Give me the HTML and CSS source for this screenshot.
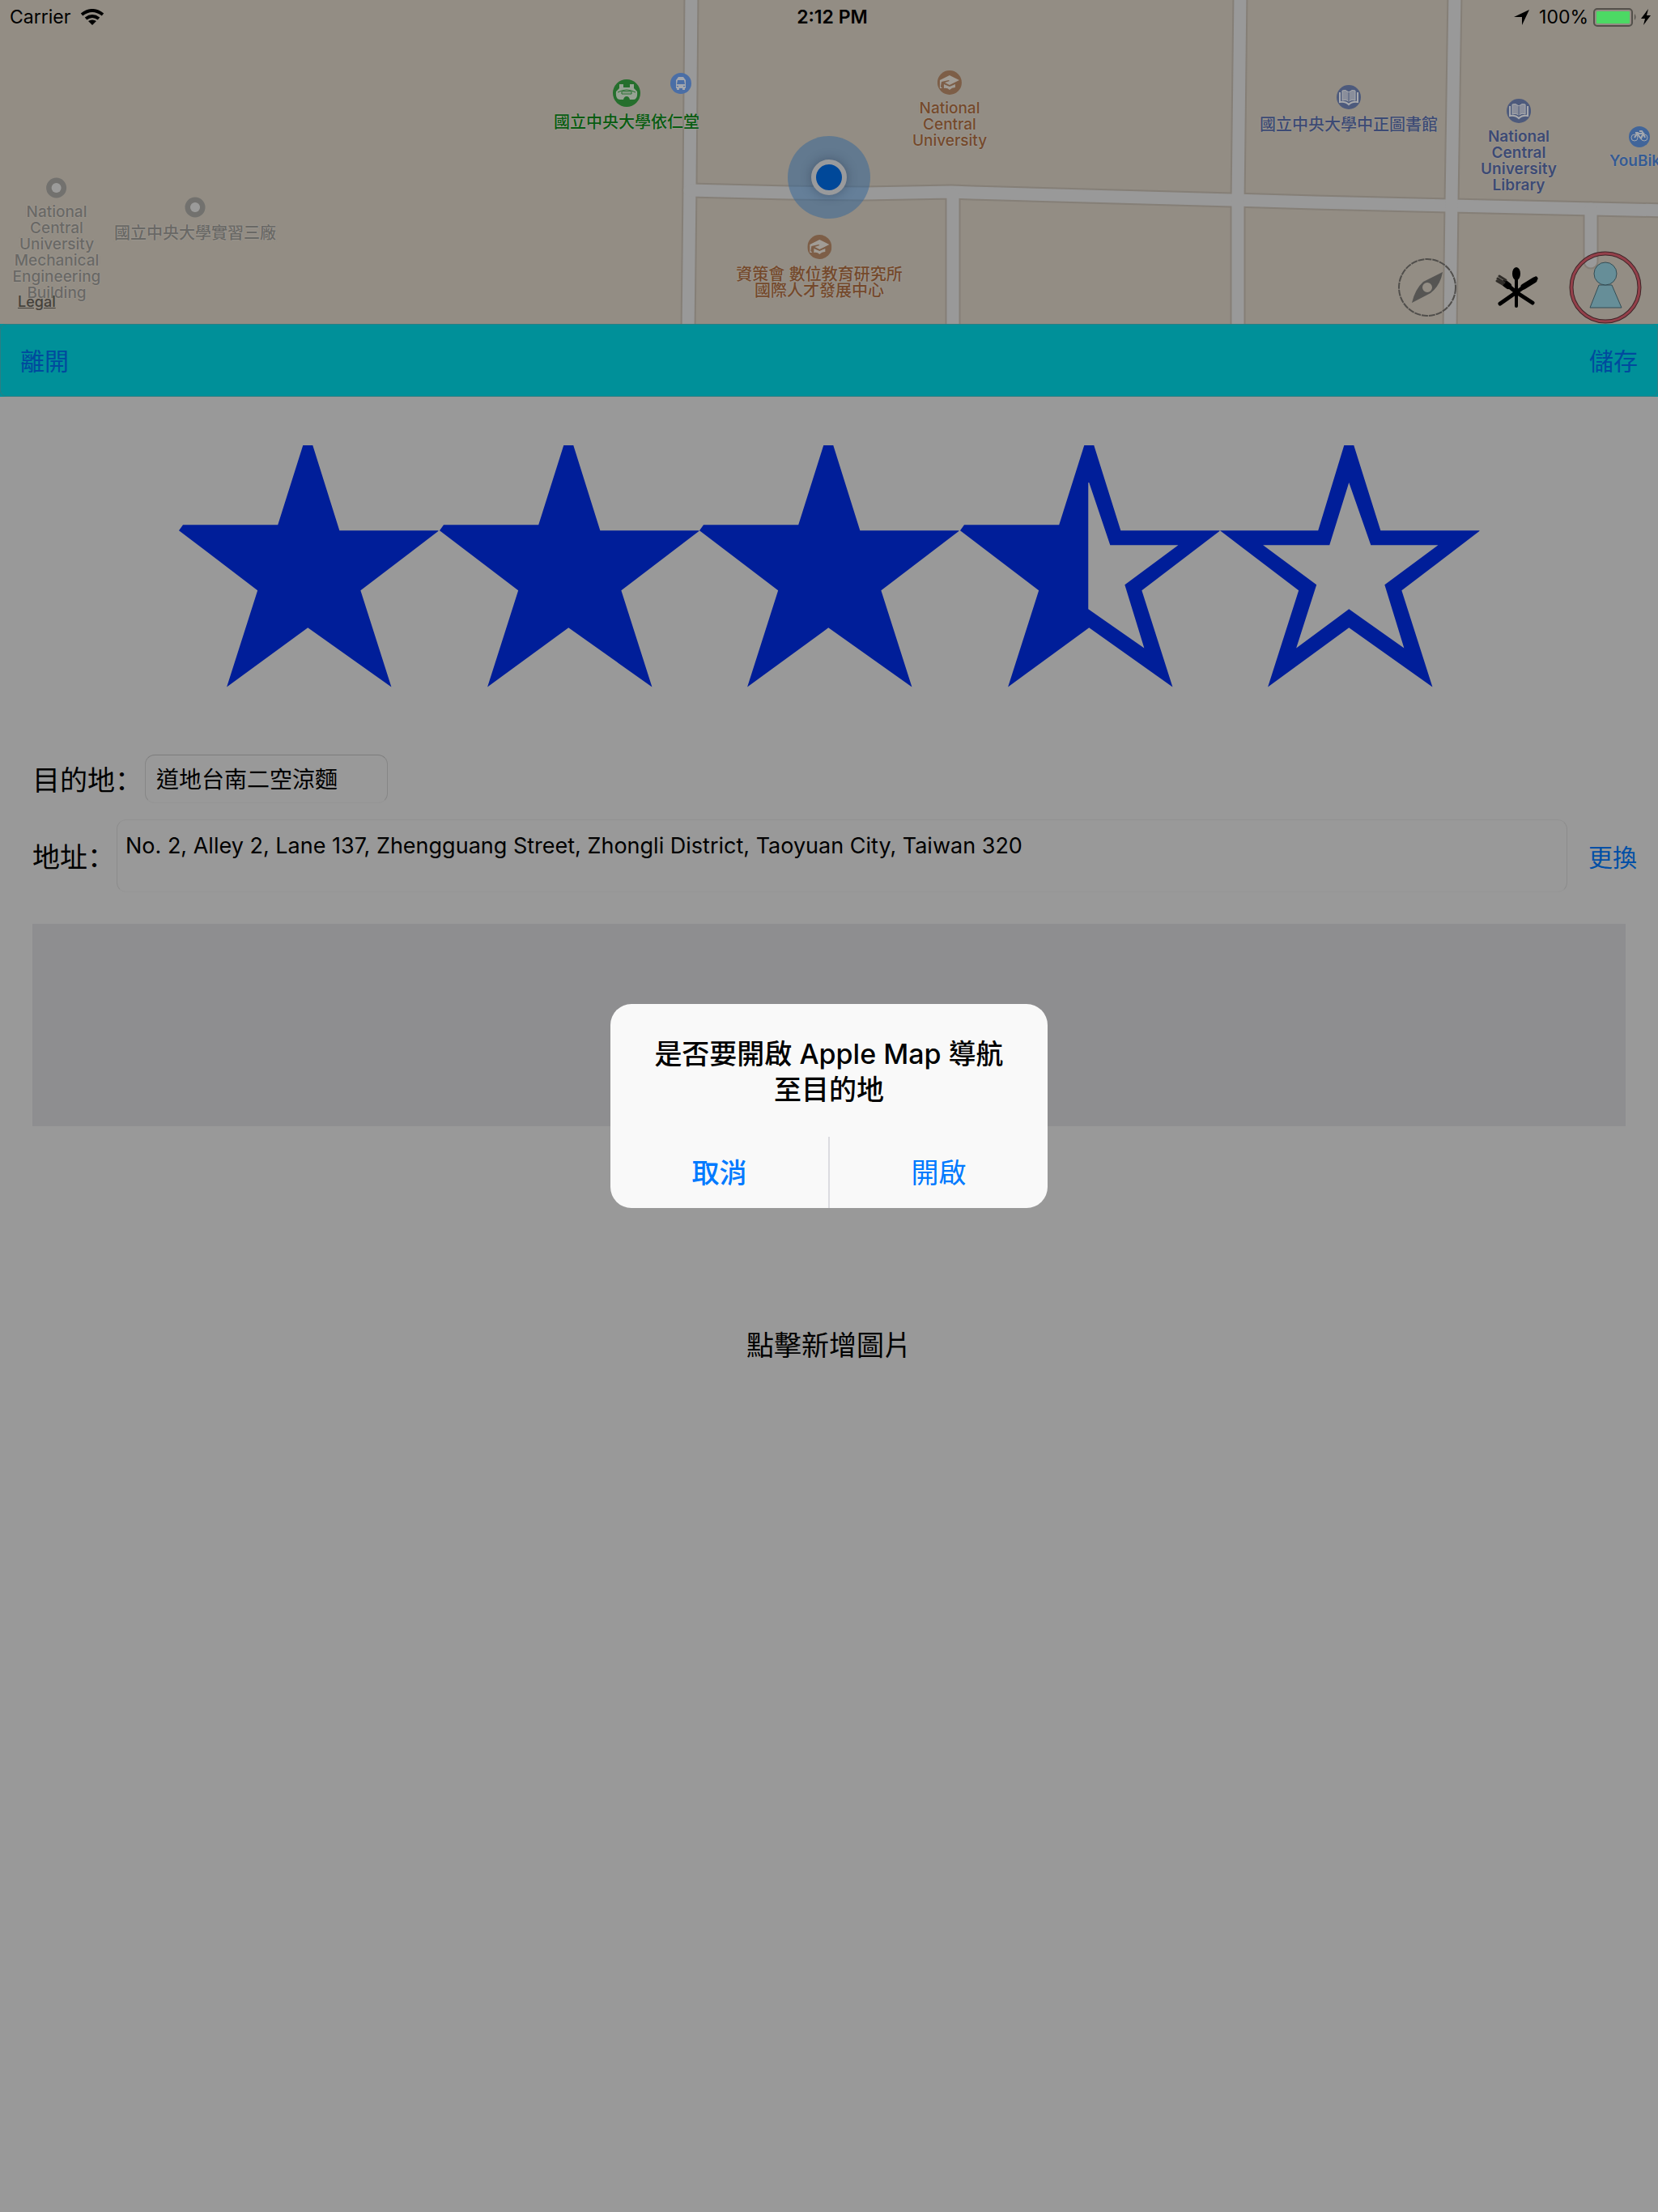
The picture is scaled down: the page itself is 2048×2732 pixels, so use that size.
FILE: index.html
```html
<!DOCTYPE html>
<html lang="zh-Hant">
<head>
<meta charset="utf-8">
<meta name="viewport" content="width=device-width, initial-scale=1">
<title>目的地</title>
<link rel="stylesheet" href="styles.css">
</head>
<body>
<!-- shared symbols -->
<svg class="symbols" aria-hidden="true">
  <symbol id="cap" viewBox="0 0 30 30">
    <circle cx="15" cy="15" r="15" fill="#7d5e47"/>
    <path d="M15 6 L27 12 L15 18 L9 15 L15 13 L14 12 L5 14 L4 20 L6 22 L3 22 L3 12 Z M8 17 L15 20 L22 17 V21 Q18 21 15 24 Q12 21 8 22 Z" fill="#a19c95"/>
  </symbol>
  <symbol id="book" viewBox="0 0 30 30">
    <circle cx="15" cy="15" r="15" fill="#4d5a7c"/>
    <path d="M15 9 Q11 5 7 7 V19 Q11 17 15 20 Q19 17 23 19 V7 Q19 5 15 9 Z" fill="#8a8e9b" stroke="#a9aaad" stroke-width="1"/>
    <path d="M15 9 V20" stroke="#4d5a7c" stroke-width="1"/>
    <path d="M4 9 V21 Q11 20 15 24 Q19 20 26 21 V9" fill="none" stroke="#a9aaad" stroke-width="2"/>
  </symbol>
  <symbol id="dot" viewBox="0 0 26 26">
    <circle cx="13" cy="13" r="9" fill="none" stroke="#72716e" stroke-width="7"/>
    <circle cx="13" cy="13" r="6" fill="#9b9b9a"/>
  </symbol>
  <symbol id="star-full" viewBox="0 0 321 299">
    <path d="M154 0 H166 L199 105 H322 L225 179 L263 298 L160 225 L60 298 L98 179 L1 105 L6 98 H123 Z"/>
  </symbol>
  <symbol id="star-empty" viewBox="0 0 321 299">
    <path fill-rule="evenodd" d="M154 0 H166 L199 105 H322 L225 179 L263 298 L160 225 L60 298 L98 179 L1 105 H122 Z M160 46 L136 123 H54 L120 172 L95 250 L160 202 L228 250 L204 172 L270 123 H187 Z"/>
  </symbol>
  <symbol id="star-half" viewBox="0 0 321 299">
    <path fill-rule="evenodd" d="M154 0 H166 L199 105 H322 L225 179 L263 298 L160 225 L60 298 L98 179 L1 105 L6 98 H123 Z M159 46 V202 L228 250 L204 172 L270 123 H186 L160 46 Z"/>
  </symbol>
</svg>

<section class="map" aria-label="地圖">
  <svg class="roads" viewBox="0 0 2048 400" preserveAspectRatio="xMidYMid slice" aria-hidden="true">
    <defs>
      <g id="road-lines">
        <path d="M854 -10 L852 230 L850 410"/>
        <path d="M852 235 L973 238 L1069 239 L1175 237 L1200 238 L1521 247 L1624 250 L1793 254 L2060 260"/>
        <path d="M1177 240 V410"/>
        <path d="M1532 -10 L1529 250 L1529 410"/>
        <path d="M1797 -10 L1793 250 L1791 410"/>
        <path d="M1965 258 V323"/>
      </g>
    </defs>
    <use href="#road-lines" class="road-edge"/>
    <use href="#road-lines" class="road-fill"/>
  </svg>

  <div class="pin pin-mech"><svg class="s26"><use href="#dot"/></svg><span>National<br>Central<br>University<br>Mechanical<br>Engineering<br>Building</span></div>
  <div class="pin pin-cjk pin-factory"><svg class="s26"><use href="#dot"/></svg><span>國立中央大學實習三廠</span></div>
  <div class="pin pin-cjk pin-hall"><svg class="s34" viewBox="0 0 34 34"><circle cx="17" cy="17" r="17" fill="#256f2d"/><path d="M8 6 H13 V10 H21 V6 H26 V11 L30 15 Q31 25 25 25 H21 Q20 21 17 21 Q14 21 13 25 H9 Q3 25 4 15 L8 11 Z" fill="#97a294"/><path d="M6 16 Q17 10 28 16 M11 15 H23 V18 H11 Z" fill="none" stroke="#256f2d" stroke-width="1"/></svg><span>國立中央大學依仁堂</span></div>
  <div class="pin pin-bus"><svg class="s26" viewBox="0 0 26 26"><circle cx="13" cy="13" r="13" fill="#4a6ea6"/><path d="M10 5 H16 L19 9 V19 H7 V9 Z M8 19 H11 V21 H8 Z M15 19 H18 V21 H15 Z" fill="#a3a7ae"/><path d="M9 9 H17 L18 14 H8 Z M8 16 H10 V17 H8 Z M16 16 H18 V17 H16 Z" fill="#4a6ea6"/></svg></div>
  <div class="pin pin-ncu"><svg class="s30"><use href="#cap"/></svg><span>National<br>Central<br>University</span></div>
  <div class="pin pin-cjk pin-iii"><svg class="s30"><use href="#cap"/></svg><span>資策會 數位教育研究所<br>國際人才發展中心</span></div>
  <div class="pin pin-cjk pin-zhongzheng"><svg class="s30"><use href="#book"/></svg><span>國立中央大學中正圖書館</span></div>
  <div class="pin pin-library"><svg class="s30"><use href="#book"/></svg><span>National<br>Central<br>University<br>Library</span></div>
  <div class="pin pin-youbike"><svg class="s26" viewBox="0 0 26 26"><circle cx="13" cy="13" r="13" fill="#41659a"/><g fill="none" stroke="#a3a7ae" stroke-width="1"><circle cx="7" cy="14" r="4"/><circle cx="19" cy="14" r="4"/><path d="M7 14 L10 9 L15 15 L18 9 H10 M18 9 L16 6 H13 M18 9 L20 14 M8 8 H12" stroke-width="2"/></g></svg><span>YouBike</span></div>
  <div class="here"></div>
  <a class="legal" href="#legal">Legal</a>

  <header class="status">
    <div class="status-left">Carrier
      <svg width="30" height="20" viewBox="0 0 30 20" fill="none" stroke="#000" stroke-width="4"><path d="M2 7 Q15 -3 28 7"/><path d="M7 12 Q15 6 23 12"/><path d="M15 20 L10 15 Q15 12 20 15 Z" fill="#000" stroke="none"/></svg>
    </div>
    <div class="status-time">2:12 PM</div>
    <div class="status-right">
      <svg width="19" height="19" viewBox="0 0 19 19"><path d="M19 0 L10 19 V9 H0 Z"/></svg>
      <span class="percent">100%</span>
      <svg width="72" height="24" viewBox="0 0 72 24"><rect x="1" y="2" width="47" height="21" rx="4" fill="none" stroke="#534f4a" stroke-width="2"/><rect x="4" y="5" width="41" height="15" rx="1" fill="#4cd964"/><path d="M51 8 Q54 12 51 16 Z" fill="#534f4a"/><path d="M68 2 L59 14 H64 L62 22 L71 10 H66 Z"/></svg>
    </div>
  </header>

  <div class="map-tools">
    <button type="button" aria-label="指南針"><svg viewBox="0 0 90 90"><circle cx="45" cy="45" r="35" fill="none" stroke="#504e4b" stroke-width="2" stroke-dasharray="8 1"/><path fill-rule="evenodd" d="M64 26 Q61 43 49 52 L26 64 Q30 47 40 38 Z M45 39 A6 6 0 1 0 45 51 A6 6 0 1 0 45 39 Z" fill="#565553"/></svg></button>
    <button type="button" aria-label="餐廳"><svg viewBox="0 0 90 90" stroke="#000" stroke-linecap="round" fill="none"><path d="M45 24 V68" stroke-width="4"/><ellipse cx="45" cy="28" rx="4" ry="7" fill="#000" stroke-width="2"/><path d="M45 51 L69 34 M45 51 L25 65 M45 51 L65 64" stroke-width="5"/><path d="M54 44 L67 36" stroke-width="7"/><path d="M45 51 L30 39" stroke-width="5"/><path d="M35 43 L31 40" stroke-width="8"/><path d="M32 36 L24 31 M30 39 L22 34 M28 41 L21 37" stroke="#302d29" stroke-width="3"/></svg></button>
    <button type="button" aria-label="街景"><svg viewBox="0 0 90 90"><circle cx="45" cy="45" r="42" fill="none" stroke="#3f2528" stroke-width="5"/><circle cx="45" cy="45" r="42" fill="none" stroke="#94404a" stroke-width="3"/><path d="M37 42 H53 L65 70 H26 Z" fill="#668e98" stroke="#344d55" stroke-width="1"/><circle cx="45" cy="28" r="14" fill="#668e98" stroke="#344d55" stroke-width="1"/></svg></button>
  </div>
</section>

<nav class="toolbar">
  <button type="button">離開</button>
  <button type="button">儲存</button>
</nav>

<main>
  <div class="rating" role="img" aria-label="3.5 / 5">
    <svg viewBox="0 0 321 299"><use href="#star-full"/></svg>
    <svg viewBox="0 0 321 299"><use href="#star-full"/></svg>
    <svg viewBox="0 0 321 299"><use href="#star-full"/></svg>
    <svg viewBox="0 0 321 299"><use href="#star-half"/></svg>
    <svg viewBox="0 0 321 299"><use href="#star-empty"/></svg>
  </div>
  <form class="form">
    <div class="row">
      <label for="destination" lang="zh-Hans">目的地：</label>
      <input id="destination" type="text" value="道地台南二空涼麵">
    </div>
    <div class="row row-address">
      <label for="address" lang="zh-Hans">地址：</label>
      <textarea id="address">No. 2, Alley 2, Lane 137, Zhengguang Street, Zhongli District, Taoyuan City, Taiwan 320</textarea>
      <button type="button">更換</button>
    </div>
  </form>
  <div class="note"></div>
  <button type="button" class="add-photo">點擊新增圖片</button>
</main>

<div class="overlay">
  <div class="alert" role="alertdialog" aria-modal="true" aria-labelledby="alert-title">
    <h1 id="alert-title">是否要開啟 Apple Map 導航<br>至目的地</h1>
    <div class="alert-actions">
      <button type="button" class="preferred">取消</button>
      <button type="button">開啟</button>
    </div>
  </div>
</div>
</body>
</html>
```
FILE: styles.css
```css
* { box-sizing: border-box; }

body {
  margin: 0;
  min-height: 100vh;
  background: #999;
  color: #000;
  font-family: Inter, "Noto Sans CJK TC", sans-serif;
  font-size: 28px;
}

button {
  margin: 0;
  padding: 0;
  border: 0;
  background: none;
  color: inherit;
  font: inherit;
}

.symbols { display: none; }

/* map */
.map {
  position: relative;
  height: 400px;
  overflow: hidden;
  background: #938d84;
}

.roads { display: block; width: 100%; height: 100%; }
.road-edge, .road-fill { fill: none; stroke-linecap: round; }
.road-edge { stroke: #857f77; stroke-width: 19px; }
.road-fill { stroke: #999; stroke-width: 15px; }

.pin {
  position: absolute;
  display: flex;
  flex-direction: column;
  align-items: center;
  gap: 7px;
  transform: translateX(-50%);
  font-size: 19px;
  line-height: 20px;
  font-weight: 500;
  text-align: center;
  white-space: nowrap;
  text-shadow: 0 0 2px #a09b94, 0 0 2px #a09b94;
}

.pin-cjk { gap: 9px; font-size: 20px; }

.pin svg { display: block; }
.s26 { width: 26px; height: 26px; }
.s30 { width: 30px; height: 30px; }
.s34 { width: 34px; height: 34px; }

.pin-mech { left: 70px; top: 219px; color: #696865; }
.pin-factory { left: 241px; top: 243px; color: #696865; }
.pin-hall { left: 774px; top: 98px; color: #075c10; }
.pin-bus { left: 841px; top: 90px; }
.pin-ncu { left: 1173px; top: 87px; color: #74492b; }
.pin-iii { left: 1012px; top: 290px; color: #74492b; }
.pin-zhongzheng { left: 1666px; top: 105px; color: #3c4a74; }
.pin-library { left: 1876px; top: 122px; color: #3c4a74; font-weight: 600; }
.pin-youbike { left: 2025px; top: 156px; color: #355b93; font-weight: 600; }

.here {
  position: absolute;
  left: 1024px;
  top: 219px;
  width: 102px;
  height: 102px;
  border-radius: 50%;
  transform: translate(-50%, -50%);
  background: rgba(49, 101, 154, .5);
}

.here::after {
  content: "";
  position: absolute;
  inset: 29px;
  border: 6px solid #999a9c;
  border-radius: 50%;
  background: #004899;
  box-shadow: 0 0 14px rgba(30, 40, 60, .4);
}

.legal {
  position: absolute;
  left: 22px;
  bottom: 16px;
  color: #45413b;
  font-size: 18px;
  line-height: 22px;
  font-weight: 500;
}

.map-tools {
  position: absolute;
  right: 20px;
  bottom: 0;
  display: flex;
  gap: 20px;
}

.map-tools button, .map-tools svg { display: block; width: 90px; height: 90px; }

/* status bar lies over the map */
.status {
  position: absolute;
  inset: 0 0 auto;
  display: grid;
  grid-template-columns: 1fr auto 1fr;
  align-items: center;
  height: 42px;
  padding: 0 8px 0 12px;
  font-size: 23px;
}

.status-left, .status-right { display: flex; align-items: center; gap: 12px; }
.status-right { justify-content: flex-end; }
.status-time { padding-left: 4px; font-weight: 600; }
.percent { margin-right: -6px; }

/* toolbar */
.toolbar {
  display: flex;
  justify-content: space-between;
  align-items: center;
  height: 90px;
  padding: 0 24px 2px;
  border: 1px solid #2c7e83;
  border-radius: 8px;
  background: #009099;
  box-shadow: 0 0 0 8px #009099;
  clip-path: inset(0);
  color: #004a9e;
  font-size: 30px;
}

/* content */
main { display: flex; flex-direction: column; }

.rating {
  display: flex;
  width: 78.5%;
  margin: 60px auto 0;
  fill: #001e99;
}

.rating svg { flex: 1; min-width: 0; display: block; overflow: visible; }

.form {
  display: flex;
  flex-direction: column;
  gap: 20px;
  margin-top: 83px;
  padding: 0 26px 0 40px;
}

.row { display: flex; align-items: center; }

.row label {
  font-family: "Noto Sans CJK SC", sans-serif;
  font-size: 34px;
  line-height: 44px;
}

.row input, .row textarea {
  border: 1px solid #8e8e8e;
  border-radius: 12px;
  background: transparent;
  color: #000;
  font-family: inherit;
  outline: 0;
}

.row input {
  width: 300px;
  height: 60px;
  margin-left: 3px;
  padding: 0 13px 2px;
  border-color: #7c7c7c #868686 #949494;
  font-size: 28px;
}

.row textarea {
  flex: 1;
  height: 90px;
  margin: 0 26px 0 2px;
  padding: 15px 10px;
  border-color: #929292 #8c8c8c #959595;
  font-size: 27px;
  line-height: 34px;
  resize: none;
}

.row-address button { color: #004fa6; font-size: 30px; }

.note {
  height: 250px;
  margin: 39px 40px 0;
  background: #8e8e90;
}

.add-photo {
  align-self: center;
  margin-top: 247px;
  font-size: 34px;
  line-height: 48px;
}

/* alert */
.overlay {
  position: fixed;
  inset: 0;
  display: grid;
  place-items: center;
}

.alert {
  width: 540px;
  border-radius: 26px;
  background: #f9f9f9;
  text-align: center;
}

.alert h1 {
  margin: 0;
  padding: 40px 32px 36px;
  font-size: 34px;
  line-height: 44px;
  font-weight: 500;
}

.alert-actions {
  display: flex;
  color: #007aff;
  font-size: 34px;
}

.alert-actions button { flex: 1; height: 88px; padding-bottom: 4px; }
.alert-actions button + button { border-left: 2px solid #dcdce0; }
.alert-actions .preferred { font-weight: 500; }
```
